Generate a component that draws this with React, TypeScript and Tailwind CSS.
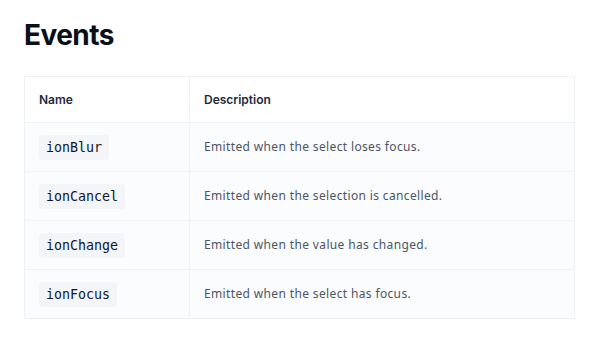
import React from 'react';

const events = [
  { name: 'ionBlur', description: 'Emitted when the select loses focus.' },
  { name: 'ionCancel', description: 'Emitted when the selection is cancelled.' },
  { name: 'ionChange', description: 'Emitted when the value has changed.' },
  { name: 'ionFocus', description: 'Emitted when the select has focus.' },
];

function App() {
  return (
    <div className="min-h-screen bg-white px-6 pt-[17px] font-['Inter',sans-serif]">
      <h1 className="text-[28px] font-bold leading-[36px] tracking-[-0.02em] text-[#0a0f1a]">Events</h1>
      <table className="mt-[23px] w-[551px] border-collapse border border-[#eef1f5] text-left">
        <thead>
          <tr className="h-[46px]">
            <th className="w-[165px] border border-[#eef1f5] px-[14px] text-[12px] font-semibold text-[#1e293b]">Name</th>
            <th className="border border-[#eef1f5] px-[14px] text-[12px] font-semibold text-[#1e293b]">Description</th>
          </tr>
        </thead>
        <tbody>
          {events.map((ev) => (
            <tr key={ev.name} className="h-[49px] bg-[#fbfcfe]">
              <td className="border border-[#eef1f5] px-[14px]">
                <code className="inline-block rounded-[4px] bg-[#f3f5f9] px-[7px] py-[3px] font-['DejaVu_Sans_Mono',monospace] text-[13.3px] leading-[19px] text-[#0f172a]">
                  {ev.name}
                </code>
              </td>
              <td className="border border-[#eef1f5] px-[14px] font-['Noto_Sans',sans-serif] text-[12px] tracking-[0.03em] text-[#4b5563]">
                {ev.description}
              </td>
            </tr>
          ))}
        </tbody>
      </table>
    </div>
  );
}

export default App;
